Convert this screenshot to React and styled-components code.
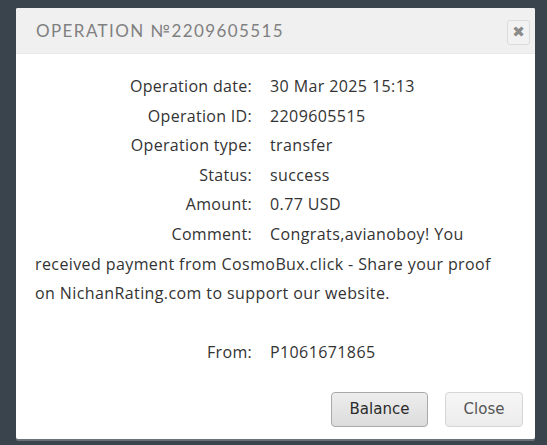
import React from "react";
import styled, { createGlobalStyle } from "styled-components";

const GlobalStyle = createGlobalStyle`
  html, body {
    margin: 0;
    padding: 0;
    background: #3a444c;
    height: 100%;
  }
  body {
    overflow: hidden;
  }
`;

const Page = styled.div`
  width: 547px;
  height: 445px;
  padding: 8px 0 0 16px;
  box-sizing: border-box;
`;

const Dialog = styled.div`
  width: 519px;
  background: #fff;
  border-radius: 2px;
  box-shadow: 0 2px 0 #6b7178;
`;

const Header = styled.div`
  display: flex;
  align-items: center;
  justify-content: space-between;
  height: 45px;
  padding: 0 5px 0 20px;
  background: #f0f0f0;
  border-bottom: 1px solid #e9e9e9;
  border-radius: 2px 2px 0 0;
`;

const Title = styled.h3`
  margin: 0;
  font-family: "Lato", "DejaVu Sans", sans-serif;
  font-weight: 400;
  font-size: 17px;
  letter-spacing: 1.4px;
  color: #808080;
`;

const CloseIcon = styled.button`
  width: 23px;
  height: 25px;
  margin-top: 3px;
  padding: 0;
  border: 1px solid #dcdcdc;
  border-radius: 3px;
  background: #f2f2f2;
  color: #8a8a8a;
  font-family: "DejaVu Sans", sans-serif;
  font-weight: 700;
  font-size: 15px;
  line-height: 23px;
  cursor: pointer;
`;

const Body = styled.div`
  padding: 18px 26px 23px 19px;
  font-family: "Open Sans", sans-serif;
  font-size: 16px;
  letter-spacing: 0.4px;
  line-height: 29.6px;
  color: #333;
`;

const Row = styled.div`
  margin-top: ${(p) => (p.$gap ? "29.6px" : "0")};
`;

const Label = styled.span`
  display: inline-block;
  width: 217px;
  margin-right: 18px;
  text-align: right;
  font-weight: 500;
  letter-spacing: 0.3px;
`;

const Footer = styled.div`
  display: flex;
  justify-content: flex-end;
  gap: 17px;
  padding: 0 12px 12px 0;
`;

const Button = styled.button`
  height: 35px;
  margin-top: 1px;
  padding: 0 ${(p) => (p.$primary ? "16px" : "14px")};
  min-width: ${(p) => (p.$primary ? "97px" : "78px")};
  border: 1px solid ${(p) => (p.$primary ? "#a9a9a9" : "#d6d6d6")};
  border-radius: 4px;
  background: ${(p) =>
    p.$primary
      ? "linear-gradient(#ededed, #dcdcdc)"
      : "linear-gradient(#f6f6f6, #ececec)"};
  color: ${(p) => (p.$primary ? "#2b2b2b" : "#555")};
  font-family: "DejaVu Sans", sans-serif;
  font-size: 15px;
  cursor: pointer;
`;

const rows = [
  ["Operation date:", "30 Mar 2025 15:13"],
  ["Operation ID:", "2209605515"],
  ["Operation type:", "transfer"],
  ["Status:", "success"],
  ["Amount:", "0.77 USD"],
  [
    "Comment:",
    "Congrats,avianoboy! You received payment from CosmoBux.click - Share your proof on NichanRating.com to support our website.",
  ],
];

export default function App() {
  return (
    <Page>
      <GlobalStyle />
      <Dialog>
        <Header>
          <Title>OPERATION №2209605515</Title>
          <CloseIcon>✖</CloseIcon>
        </Header>
        <Body>
          {rows.map(([label, value]) => (
            <Row key={label}>
              <Label>{label}</Label>
              {value}
            </Row>
          ))}
          <Row $gap>
            <Label>From:</Label>
            P1061671865
          </Row>
        </Body>
        <Footer>
          <Button $primary>Balance</Button>
          <Button>Close</Button>
        </Footer>
      </Dialog>
    </Page>
  );
}
